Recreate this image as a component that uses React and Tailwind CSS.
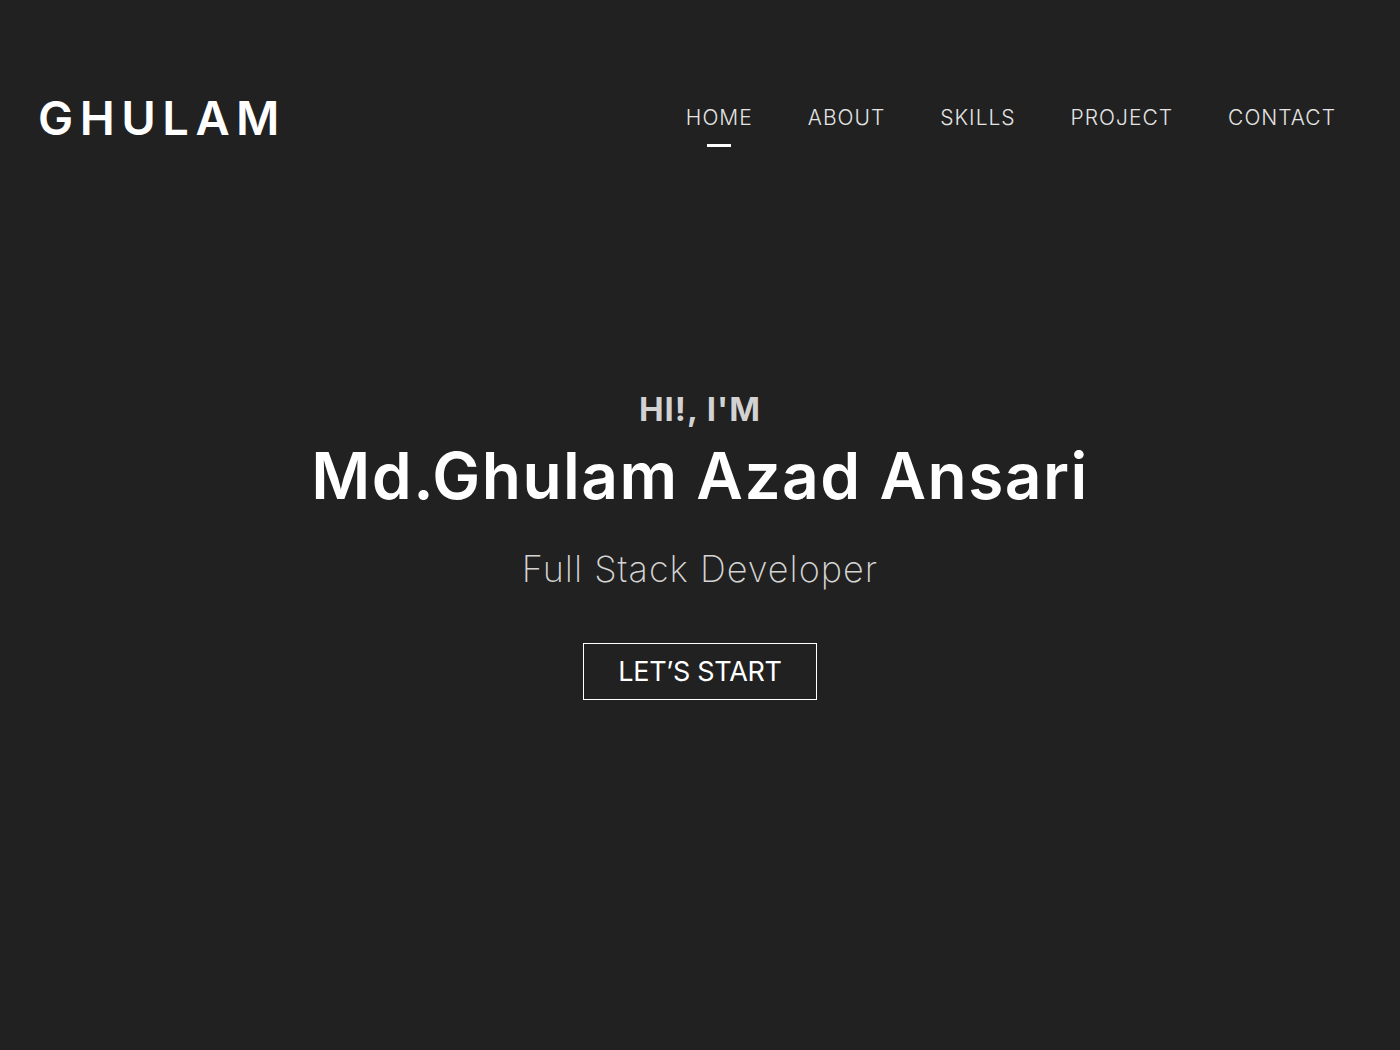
export default function App() {
  const nav = ["HOME", "ABOUT", "SKILLS", "PROJECT", "CONTACT"];
  return (
    <div className="min-h-screen w-full bg-[#212121] text-white" style={{ fontFamily: "Inter, 'Open Sans', sans-serif" }}>
      <header className="flex h-[234px] items-center justify-between pl-[38px] pr-[64px]">
        <div className="text-[47px] font-semibold leading-none tracking-[6.5px] text-white">GHULAM</div>
        <nav className="flex items-center gap-[55px]">
          {nav.map((n, i) => (
            <a key={n} href="#" className="relative text-[21px] font-light leading-none tracking-[1px] text-[#e4e4e4]">
              {n}
              {i === 0 && (
                <span className="absolute left-1/2 top-[37px] h-[3px] w-[24px] -translate-x-1/2 bg-white" />
              )}
            </a>
          ))}
        </nav>
      </header>
      <section className="flex flex-col items-center pt-[159px]">
        <div className="text-[33px] font-bold leading-none tracking-[1px] text-[#d2d2d2]">HI!, I'M</div>
        <h1 className="mt-[18px] text-[64px] font-semibold leading-none tracking-[1.5px] text-white">Md.Ghulam Azad Ansari</h1>
        <p className="mt-[43px] text-[36px] font-extralight leading-none tracking-[1px] text-[#d4d4d4]">Full Stack Developer</p>
        <button className="mt-[56px] flex h-[57px] w-[234px] items-center justify-center border border-white text-[27px] font-normal leading-none tracking-[-0.3px] text-white">
          LET’S START
        </button>
      </section>
    </div>
  );
}
